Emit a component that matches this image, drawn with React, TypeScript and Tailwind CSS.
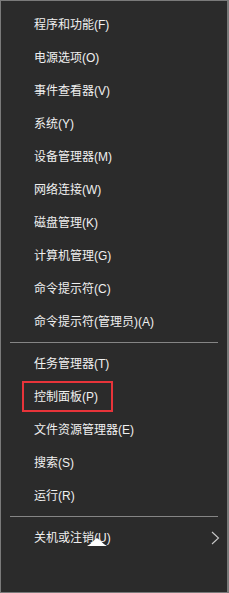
import React from "react";

const groups: string[][] = [
  [
    "程序和功能(F)",
    "电源选项(O)",
    "事件查看器(V)",
    "系统(Y)",
    "设备管理器(M)",
    "网络连接(W)",
    "磁盘管理(K)",
    "计算机管理(G)",
    "命令提示符(C)",
    "命令提示符(管理员)(A)",
  ],
  ["任务管理器(T)", "控制面板(P)", "文件资源管理器(E)", "搜索(S)", "运行(R)"],
];

function Item({ label, boxed, submenu }: { label: string; boxed?: boolean; submenu?: boolean }) {
  return (
    <div className="relative flex h-[33px] items-center pl-[33px] pr-2">
      {boxed && (
        <div className="absolute left-[21px] top-[1px] h-[31px] w-[91px] border-2 border-[#e8343a]" />
      )}
      <span className="text-[12px] leading-none text-[#f0f0f0]">{label}</span>
      {submenu && (
        <svg className="absolute right-[7px] top-[10px]" width="9" height="14" viewBox="0 0 9 14">
          <polyline points="1,1 7.5,7 1,13" fill="none" stroke="#c8c8c8" strokeWidth="1.1" />
        </svg>
      )}
    </div>
  );
}

export default function App() {
  return (
    <div
      className="relative h-[593px] w-[229px] border border-r-2 border-[#7a7a7a] bg-[#2b2b2b] pt-[7px]"
      style={{ fontFamily: '"Liberation Sans", "Noto Sans CJK SC", sans-serif' }}
    >
      {groups.map((items, gi) => (
        <div key={gi}>
          {items.map((label) => (
            <Item key={label} label={label} boxed={label === "控制面板(P)"} />
          ))}
          <div className="mx-[9px] my-[4px] h-px bg-[#858585]" />
        </div>
      ))}
      <Item label="关机或注销(U)" submenu />

      {/* mouse pointer peeking over the last item */}
      <svg className="absolute left-[85px] top-[536px]" width="22" height="10" viewBox="0 0 22 10">
        <path d="M1 9 C5 7 8 3 11 1 C14 3 17 7 21 9 Z" fill="#ffffff" />
      </svg>
    </div>
  );
}
